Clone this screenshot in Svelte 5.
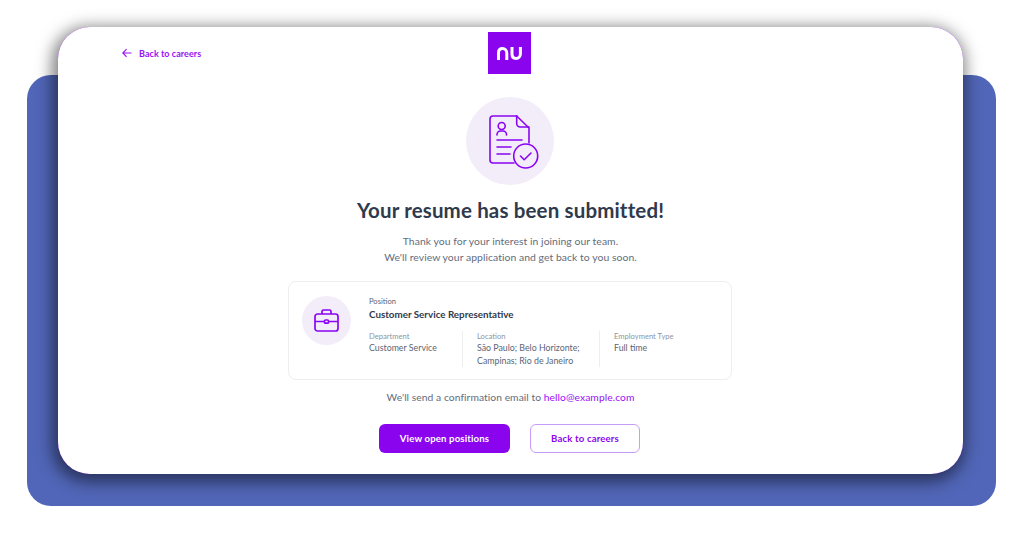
<script lang="ts">
	const details = [
		{ label: 'Department', lines: ['Customer Service'] },
		{ label: 'Location', lines: ['São Paulo; Belo Horizonte;', 'Campinas; Rio de Janeiro'] },
		{ label: 'Employment Type', lines: ['Full time'] }
	];
</script>

<div class="stage">
	<div class="panel">
		<main class="card">
			<header class="top">
				<a class="back" href="#careers">
					<svg width="10" height="10" viewBox="0 0 10 10" fill="none" stroke="currentColor" stroke-width="1.1">
						<path d="M9.5 5H1M4.6 1.2 0.8 5l3.8 3.8" />
					</svg>
					Back to careers
				</a>
				<div class="logo">
					<svg width="25" height="13" viewBox="0 0 25 13" fill="none" stroke="#fff" stroke-width="3">
						<path d="M1.500 13V6C1.500 3.200 3.300 1.600 5.600 1.600S9.800 3.200 9.800 6V13" />
						<path d="M15 0V7C15 9.800 16.800 11.400 19.100 11.400S23.400 9.800 23.400 7V0" />
					</svg>
				</div>
			</header>

			<div class="hero">
				<svg width="50" height="54" viewBox="0 0 50 54" fill="none" stroke="#8a05f0" stroke-width="1.6" stroke-linecap="round" stroke-linejoin="round">
					<path d="M27.700 1H4a3 3 0 0 0-3 3v41a3 3 0 0 0 3 3h21" />
					<path d="M27.700 1 40 13V28" />
					<path d="M27.700 1V8.500a3.500 3.500 0 0 0 3.500 3.500H40" />
					<circle cx="12.700" cy="11" r="3.500" />
					<path d="M8 20v-.5a3.500 3.500 0 0 1 3.500-3.500h2.500a3.500 3.500 0 0 1 3.500 3.500v.5" />
					<path d="M8 25H33M8 32H22M8 39H21" />
					<circle cx="36.700" cy="41" r="12" />
					<path d="M31.500 41 35.200 44.700 42 38" />
				</svg>
			</div>

			<h1>Your resume has been submitted!</h1>
			<p class="thanks">
				Thank you for your interest in joining our team.<br />
				We'll review your application and get back to you soon.
			</p>

			<section class="job">
				<div class="job-icon">
					<svg width="25" height="23" viewBox="0 0 25 23" fill="none" stroke="#8a05f0" stroke-width="1.700" stroke-linejoin="round">
						<rect x="1" y="5" width="23" height="17" rx="2.500" />
						<path d="M8 5V2.500A1.500 1.500 0 0 1 9.500 1h6A1.500 1.500 0 0 1 17 2.500V5" />
						<path d="M1 12.500H10M15 12.500H24" />
						<rect x="10.500" y="11" width="4" height="3.200" rx="1" />
					</svg>
				</div>
				<div class="job-body">
					<div class="label">Position</div>
					<div class="title">Customer Service Representative</div>
					<div class="cols">
						{#each details as d}
							<div class="col">
								<div class="label light">{d.label}</div>
								{#each d.lines as line}
									<div class="value">{line}</div>
								{/each}
							</div>
						{/each}
					</div>
				</div>
			</section>

			<p class="confirm">We'll send a confirmation email to <a href="#mail">hello@example.com</a></p>

			<div class="actions">
				<button class="primary">View open positions</button>
				<button class="secondary">Back to careers</button>
			</div>
		</main>
	</div>
</div>

<style>
	:global(body) {
		background: #fff;
		font-family: Lato, 'Open Sans', sans-serif;
	}

	.stage {
		height: 536px;
		box-sizing: border-box;
		padding: 75px 28px 30px 27px;
	}

	.panel {
		height: 431px;
		padding: 0 33px 0 31px;
		background: #5166b8;
		border-radius: 24px;
	}

	.card {
		position: relative;
		top: -48px;
		height: 447px;
		background: #fff;
		border-radius: 32px;
		box-shadow:
			0 0 0.6px #8a05f0,
			-2px 4px 16px 4px rgba(0, 0, 0, 0.5);
		display: flex;
		flex-direction: column;
		align-items: center;
	}

	.top {
		align-self: stretch;
		display: grid;
		grid-template-columns: 1fr auto 1fr;
		padding-top: 5px;
		margin-right: 2px;
		box-sizing: border-box;
		height: 70px;
	}

	.back {
		display: flex;
		align-items: center;
		gap: 7px;
		height: 42px;
		margin-left: 64px;
		color: #9a10f5;
		font-size: 9px;
		font-weight: 700;
		letter-spacing: 0.05px;
		text-decoration: none;
	}

	.logo {
		width: 43px;
		height: 42px;
		background: #8a05ee;
		display: flex;
		align-items: center;
		justify-content: center;
	}

	.hero {
		width: 88px;
		height: 88px;
		border-radius: 50%;
		background: #f3edfa;
		display: flex;
		align-items: center;
		justify-content: center;
		margin-right: 2px;
		padding: 2px 0 0 9px;
		box-sizing: border-box;
	}

	h1 {
		margin: 12px 0 0;
		font-size: 20.5px;
		line-height: 26px;
		font-weight: 700;
		color: #2f3a4c;
		letter-spacing: 0.15px;
	}

	.thanks {
		margin: 10px 0 0;
		font-size: 10.4px;
		line-height: 16px;
		color: #626c7c;
		text-align: center;
		letter-spacing: 0.05px;
	}

	.job {
		width: 444px;
		height: 99px;
		box-sizing: border-box;
		margin-top: 16px;
		margin-right: 1px;
		padding: 14px 13px;
		border: 1px solid #eeeef2;
		border-radius: 8px;
		display: flex;
		gap: 18px;
	}

	.job-icon {
		width: 49px;
		height: 49px;
		flex: none;
		border-radius: 50%;
		background: #f3edfa;
		display: flex;
		align-items: center;
		justify-content: center;
	}

	.job-body {
		flex: 1;
	}

	.label {
		font-size: 7.6px;
		line-height: 10px;
		color: #5b6575;
	}

	.label.light {
		color: #8d95a3;
	}

	.title {
		margin-top: 2px;
		font-size: 9.8px;
		line-height: 13px;
		font-weight: 700;
		color: #2f3a4c;
	}

	.cols {
		display: grid;
		grid-template-columns: 93px 137px 1fr;
		margin-top: 10px;
	}

	.col {
		min-height: 33px;
	}

	.col + .col {
		border-left: 1px solid #eeeef2;
		padding-left: 14px;
	}

	.value {
		font-size: 8.8px;
		line-height: 13px;
		color: #5b6575;
	}

	.confirm {
		margin: 10px 0 0;
		font-size: 10.3px;
		line-height: 14px;
		color: #626c7c;
		letter-spacing: 0.05px;
	}

	.confirm a {
		color: #9a10f5;
		text-decoration: none;
	}

	.actions {
		display: flex;
		gap: 20px;
		margin-top: 20px;
		margin-right: 2px;
	}

	button {
		height: 29px;
		box-sizing: border-box;
		border-radius: 6px;
		font: 700 9.6px Lato, sans-serif;
		letter-spacing: 0.15px;
	}

	.primary {
		width: 131px;
		border: none;
		background: #8a05ee;
		color: #fff;
	}

	.secondary {
		width: 110px;
		background: #fff;
		border: 1px solid #c89cf7;
		color: #8a05ee;
	}
</style>
